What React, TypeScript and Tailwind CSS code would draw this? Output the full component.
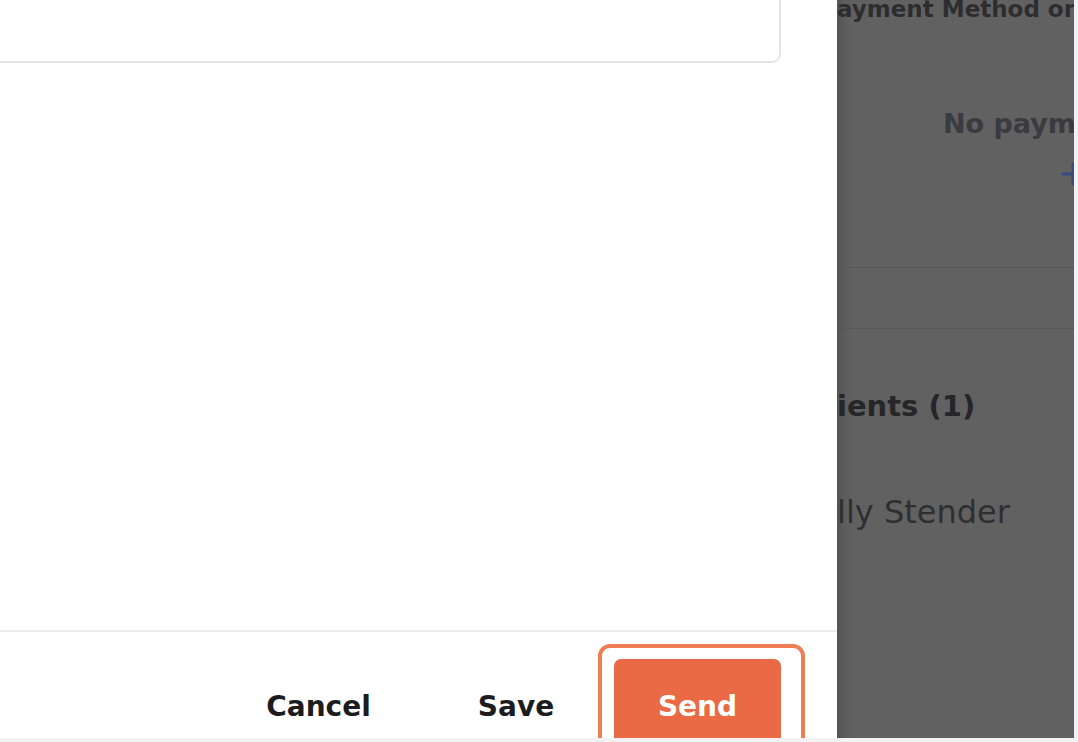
import { Plus } from 'lucide-react';

const FONT = { fontFamily: '"DejaVu Sans", "Liberation Sans", sans-serif' };

// clipped text: the lead part overflows to the left into the hidden area
function Clipped({ lead, rest }: { lead: string; rest: string }) {
  return (
    <div className="flex whitespace-nowrap">
      <span className="w-0 flex justify-end">{lead}</span>
      <span>{rest}</span>
    </div>
  );
}

function Drawer() {
  return (
    <div className="w-[837px] h-[738px] bg-white flex flex-col flex-shrink-0">
      <div className="flex-1">
        <div className="-mt-[10px] ml-[-10px] mr-[56px] h-[73px] border-2 border-[#e3e3ec] rounded-[9px]" />
      </div>

      <div className="h-[2px] bg-[#ebebee]" />

      <div className="h-[106px] overflow-hidden flex items-start justify-end pt-[12px] pr-[32px]">
        <button className="mt-[15px] mr-[49px] w-[165px] h-[96px] flex items-center justify-center text-[28px] font-bold text-[#1c1c1e]">
          Cancel
        </button>
        <button className="mt-[15px] mr-[16px] w-[132px] h-[96px] flex items-center justify-center text-[28px] font-bold text-[#1c1c1e]">
          Save
        </button>
        <div className="border-4 border-[#ef7e55] rounded-[12px] pt-[11px] pl-[12px] pr-[20px]">
          <button className="w-[167px] h-[96px] rounded-[7px] bg-[#e96a45] flex items-center justify-center text-[28px] font-bold text-white">
            Send
          </button>
        </div>
      </div>
    </div>
  );
}

function BackdropPanel() {
  return (
    <div className="w-[237px] h-[738px] bg-[#616161] overflow-hidden flex flex-col shadow-[inset_14px_0_12px_-10px_rgba(0,0,0,0.18)]">
      <div className="-mt-[2px] text-[23px] leading-none font-bold text-[#2d2d30]">
        <Clipped lead="P" rest="ayment Method on File" />
      </div>

      <div className="mt-[89px] ml-[106px] text-[27px] leading-none font-bold text-[#3a3b40] whitespace-nowrap">
        No payment methods
      </div>

      <div className="mt-[20px] ml-[219px] text-[#384a80]">
        <Plus size={34} strokeWidth={2.1} />
      </div>

      <div className="mt-[76px] h-px bg-[#575757]" />
      <div className="mt-[60px] h-px bg-[#575757]" />

      <div className="mt-[63px] text-[29px] leading-none font-bold text-[#262628]">
        <Clipped lead="Recip" rest="ients (1)" />
      </div>

      <div className="mt-[75px] text-[32px] leading-none text-[#2f2f31]">
        <Clipped lead="Sa" rest="lly Stender" />
      </div>
    </div>
  );
}

export default function App() {
  return (
    <div className="w-[1078px] h-[742px] overflow-hidden bg-[#f2f2f5] flex flex-col" style={FONT}>
      <div className="flex">
        <Drawer />
        <BackdropPanel />
        <div className="w-[4px] bg-[#f2f2f5]" />
      </div>
      <div className="h-[4px] bg-[#f2f2f5]" />
    </div>
  );
}
